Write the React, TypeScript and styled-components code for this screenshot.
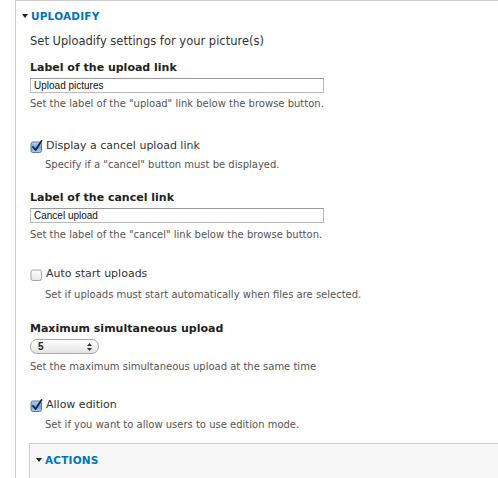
import React from "react";
import styled, { createGlobalStyle } from "styled-components";

const GlobalStyle = createGlobalStyle`
  html, body {
    margin: 0;
    padding: 0;
    background: #fff;
    overflow: hidden;
  }
  body {
    font-family: "DejaVu Sans", Verdana, sans-serif;
    color: #333;
  }
`;

const Page = styled.div`
  width: 498px;
  height: 478px;
  padding-left: 15px;
  box-sizing: border-box;
  overflow: hidden;
`;

const Fieldset = styled.div<{ $shaded?: boolean }>`
  width: 600px;
  box-sizing: border-box;
  border: 1px solid #ccc;
  border-right: none;
  padding: 0 0 12px 14px;
  background: ${(p) => (p.$shaded ? "#f7f7f7" : "#fff")};
`;

const Legend = styled.div<{ $top: number }>`
  display: flex;
  align-items: center;
  gap: 2px;
  height: 14px;
  margin: ${(p) => p.$top}px 0 0 -8px;
  color: #0074bd;
  font-size: 10.5px;
  font-weight: bold;
  text-transform: uppercase;
  letter-spacing: 0.2px;
`;

const Caret = styled.span`
  width: 0;
  height: 0;
  border-left: 3.5px solid transparent;
  border-right: 3.5px solid transparent;
  border-top: 4px solid #222;
  margin-right: 1px;
`;

const Text = styled.div<{ $top: number }>`
  margin-top: ${(p) => p.$top}px;
  font-size: 11.5px;
  line-height: 14px;
  color: #333;
`;

const Label = styled.div<{ $top: number }>`
  margin-top: ${(p) => p.$top}px;
  font-size: 11px;
  line-height: 14px;
  font-weight: bold;
  color: #222;
`;

const Description = styled.div<{ $top: number; $indent?: boolean }>`
  margin-top: ${(p) => p.$top}px;
  margin-left: ${(p) => (p.$indent ? 15 : 0)}px;
  font-size: 10px;
  line-height: 12px;
  color: #555;
`;

const TextInput = styled.div<{ $top: number }>`
  margin-top: ${(p) => p.$top}px;
  width: 294px;
  height: 15px;
  box-sizing: border-box;
  border: 1px solid #bbb;
  border-top-color: #999;
  padding: 0 3px;
  font-family: "Liberation Sans", Arial, sans-serif;
  font-size: 10px;
  line-height: 13px;
  color: #111;
  background: #fff;
`;

const CheckRow = styled.div<{ $top: number }>`
  margin-top: ${(p) => p.$top}px;
  display: flex;
  align-items: center;
  gap: 3px;
  font-size: 11px;
  line-height: 14px;
  color: #333;
`;

const SelectBox = styled.div<{ $top: number }>`
  margin-top: ${(p) => p.$top}px;
  width: 69px;
  height: 15px;
  box-sizing: border-box;
  border: 1px solid #aaa;
  border-radius: 7px;
  background: linear-gradient(#ffffff, #e4e4e4);
  display: flex;
  align-items: center;
  justify-content: space-between;
  padding: 0 5px 0 7px;
  font-family: "Liberation Sans", Arial, sans-serif;
  font-size: 10px;
  font-weight: bold;
  color: #222;
`;

const Inner = styled.div`
  margin: 12px 0 0 -1px;
`;

const Spacer = styled.div`
  height: 40px;
`;

function CheckBox({ checked }: { checked: boolean }) {
  const id = checked ? "cbOn" : "cbOff";
  return (
    <svg width="13" height="13" viewBox="0 0 13 13">
      <defs>
        <linearGradient id={id} x1="0" y1="0" x2="0" y2="1">
          {checked ? (
            <>
              <stop offset="0" stopColor="#b9d6f4" />
              <stop offset="0.5" stopColor="#6fa6e3" />
              <stop offset="1" stopColor="#a9cdf2" />
            </>
          ) : (
            <>
              <stop offset="0" stopColor="#ffffff" />
              <stop offset="1" stopColor="#e6e6e6" />
            </>
          )}
        </linearGradient>
      </defs>
      <rect
        x="1"
        y="2"
        width="10.5"
        height="10.5"
        rx="2"
        fill={`url(#${id})`}
        stroke={checked ? "#4f6f95" : "#9a9a9a"}
        strokeWidth="0.9"
      />
      {checked && (
        <path
          d="M3 7 L5.6 10 L11.5 1"
          fill="none"
          stroke="#1c2430"
          strokeWidth="1.8"
          strokeLinecap="round"
          strokeLinejoin="round"
        />
      )}
    </svg>
  );
}

function Arrows() {
  return (
    <svg width="7" height="10" viewBox="0 0 7 10">
      <path d="M3.5 1 L6 4 H1 Z" fill="#333" />
      <path d="M3.5 9 L6 6 H1 Z" fill="#333" />
    </svg>
  );
}

export default function App() {
  return (
    <Page>
      <GlobalStyle />
      <Fieldset>
        <Legend $top={8}>
          <Caret />
          Uploadify
        </Legend>
        <Text $top={11}>Set Uploadify settings for your picture(s)</Text>

        <Label $top={13}>Label of the upload link</Label>
        <TextInput $top={3}>Upload pictures</TextInput>
        <Description $top={5}>
          Set the label of the "upload" link below the browse button.
        </Description>

        <CheckRow $top={29}>
          <CheckBox checked />
          Display a cancel upload link
        </CheckRow>
        <Description $top={6} $indent>
          Specify if a "cancel" button must be displayed.
        </Description>

        <Label $top={20}>Label of the cancel link</Label>
        <TextInput $top={3}>Cancel upload</TextInput>
        <Description $top={6}>
          Set the label of the "cancel" link below the browse button.
        </Description>

        <CheckRow $top={26}>
          <CheckBox checked={false} />
          Auto start uploads
        </CheckRow>
        <Description $top={8} $indent>
          Set if uploads must start automatically when files are selected.
        </Description>

        <Label $top={21}>Maximum simultaneous upload</Label>
        <SelectBox $top={3}>
          <span>5</span>
          <Arrows />
        </SelectBox>
        <Description $top={7}>
          Set the maximum simultaneous upload at the same time
        </Description>

        <CheckRow $top={25}>
          <CheckBox checked />
          Allow edition
        </CheckRow>
        <Description $top={7} $indent>
          Set if you want to allow users to use edition mode.
        </Description>

        <Inner>
          <Fieldset $shaded>
            <Legend $top={9}>
              <Caret />
              Actions
            </Legend>
            <Spacer />
          </Fieldset>
        </Inner>
      </Fieldset>
    </Page>
  );
}
